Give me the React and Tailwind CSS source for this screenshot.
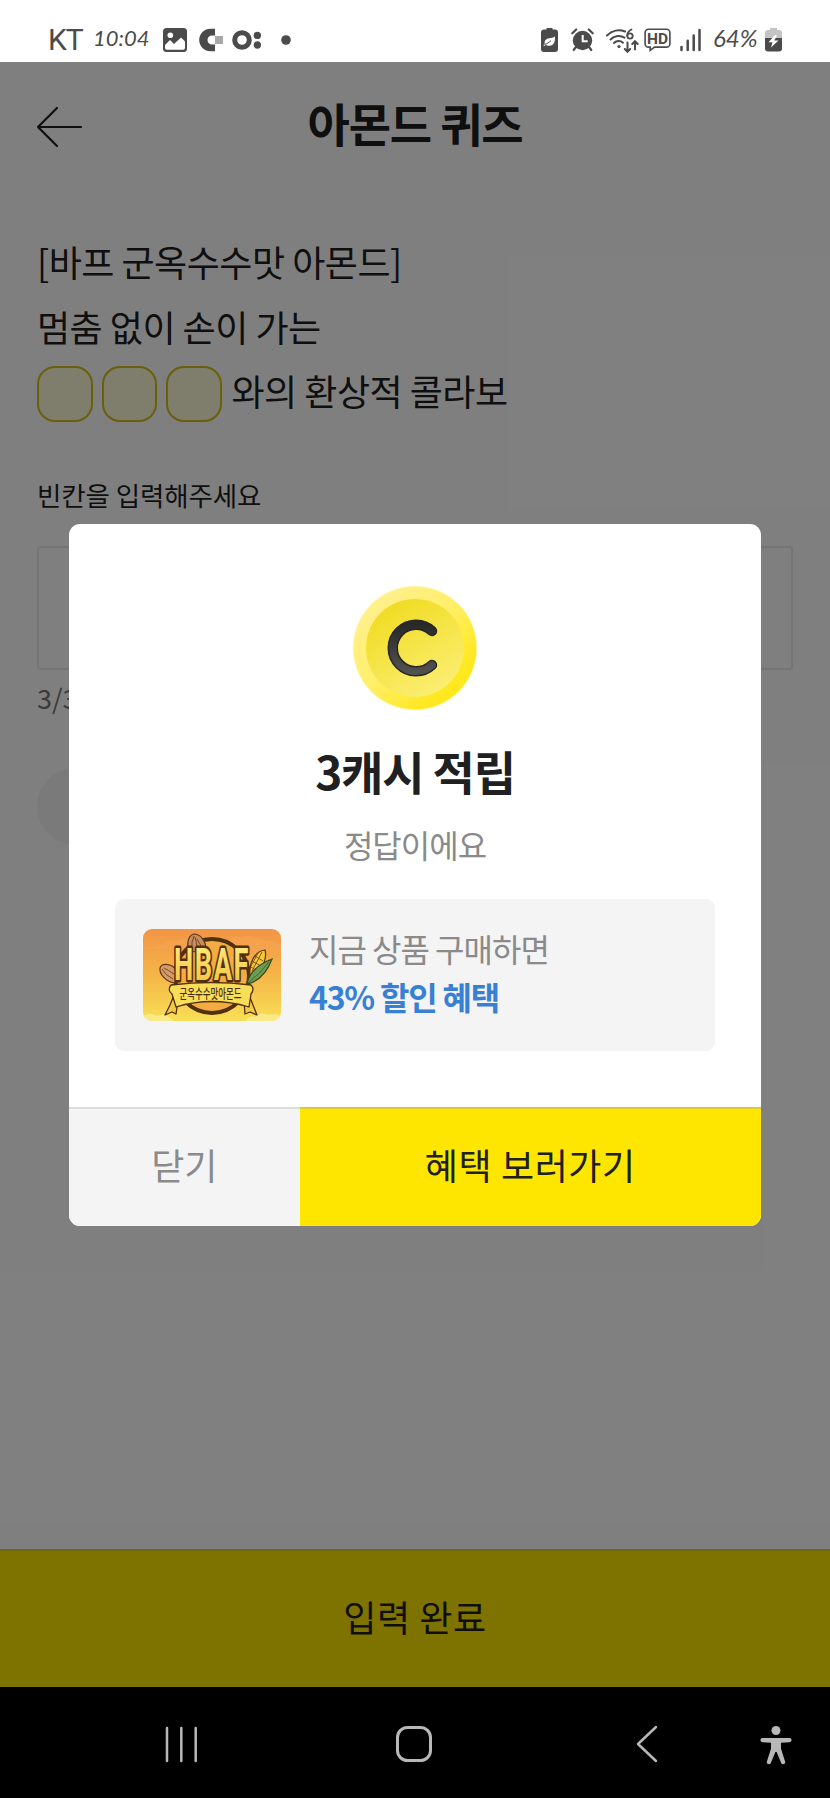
import React from "react";

const BLANKS = [0, 1, 2];

function PhotoIcon() {
    return (
        <svg width="24" height="24" viewBox="0 0 24 24" className="ml-3.5 shrink-0">
            <rect x="0" y="0" width="24" height="24" rx="3.5" fill="#4b4b4b" />
            <circle cx="7.3" cy="7.3" r="2.8" fill="#fff" />
            <path d="M2 17 7 12l4 4 7-6.5 4 4V20a1.7 1.7 0 0 1-1.7 1.7H3.7A1.7 1.7 0 0 1 2 20Z" fill="#fff" />
        </svg>
    );
}

function NotificationIcons() {
    return (
        <svg width="94" height="24" viewBox="0 0 94 24" className="ml-3 shrink-0">
            <path d="M16 0.7v6.8h-3a4.5 4.5 0 0 0 0 9h3v6.8h-4.5a11.3 11.3 0 0 1 0-22.6Z" fill="#4b4b4b" />
            <rect x="16" y="8" width="8" height="8" fill="#a9a9a9" />
            <circle cx="43" cy="12" r="7.3" fill="none" stroke="#4b4b4b" strokeWidth="5" />
            <circle cx="58.3" cy="7.4" r="3.7" fill="#4b4b4b" />
            <circle cx="58.3" cy="17" r="3.7" fill="#4b4b4b" />
            <circle cx="87" cy="12" r="4.8" fill="#4b4b4b" />
        </svg>
    );
}

function BatterySaverIcon() {
    return (
        <svg width="17" height="24" viewBox="0 0 17 24" className="shrink-0">
            <path d="M5.5 0h6v1.5H14A3 3 0 0 1 17 4.5V21a3 3 0 0 1-3 3H3a3 3 0 0 1-3-3V4.5A3 3 0 0 1 3 1.5h2.5Z" fill="#4b4b4b" />
            <path d="M14 8.5c.3 5-1 9-5.5 9.3-1.7.1-3-.5-3.6-1L3 18.3 2.5 17l1.3-1c-.8-3.5 1.5-5.3 4.2-5.7 2.5-.4 4.3-.7 6-1.8Z" fill="#fff" />
            <path d="M3.5 16.5c2.5-.7 4.5-2 6.5-3.8" stroke="#4b4b4b" strokeWidth="1" fill="none" />
        </svg>
    );
}

function AlarmIcon() {
    return (
        <svg width="23" height="24" viewBox="0 0 23 24" className="ml-[13px] shrink-0">
            <circle cx="11.5" cy="12.5" r="9.7" fill="#4b4b4b" />
            <path d="M1.3 5.3 5.2 1.5M21.7 5.3 17.8 1.5" stroke="#4b4b4b" strokeWidth="2.2" strokeLinecap="round" />
            <path d="m5 19-2.3 3M18 19l2.3 3" stroke="#4b4b4b" strokeWidth="2.2" strokeLinecap="round" />
            <path d="M11.7 7v6.2h5" stroke="#fff" strokeWidth="2" fill="none" />
        </svg>
    );
}

function WifiIcon() {
    return (
        <svg width="33" height="26" viewBox="0 0 33 26" className="mt-0.5 ml-3 shrink-0">
            <g fill="none" stroke="#4b4b4b" strokeWidth="2" strokeLinecap="round">
                <path d="M1 7.5C6 2.5 13 1 19 3.5" />
                <path d="M4.5 11.5C8.5 7.5 14.5 7 18.5 9.7" />
                <path d="M8 15c2.5-2.5 6.5-2.5 9-.3" />
                <path d="M25.5 1.5c-3 1.5-4.3 4-4.3 6" strokeWidth="1.8" />
                <circle cx="24" cy="8" r="2.7" strokeWidth="1.8" />
                <path d="M21.5 14.5v9M18.8 21l2.7 2.8 2.7-2.8" />
                <path d="M29 21.5v-8M26.300 16l2.700-2.800 2.700 2.800" />
            </g>
            <circle cx="13" cy="18.5" r="1.6" fill="#4b4b4b" />
        </svg>
    );
}

function HdIcon() {
    return (
        <svg width="27" height="24" viewBox="0 0 27 24" className="ml-[5px] shrink-0">
            <path
                d="M4.5 1.3h18a3.4 3.4 0 0 1 3.4 3.4v11a3.4 3.4 0 0 1-3.4 3.4H10.5l-4.3 3.3v-3.3H4.5a3.4 3.4 0 0 1-3.4-3.4v-11a3.4 3.4 0 0 1 3.4-3.4Z"
                fill="none"
                stroke="#4b4b4b"
                strokeWidth="1.6"
            />
            <text x="13.5" y="15.8" textAnchor="middle" fontFamily="Roboto, sans-serif" fontWeight="700" fontSize="15.5" fill="#4b4b4b">
                HD
            </text>
        </svg>
    );
}

function SignalIcon() {
    return (
        <svg width="21" height="24" viewBox="0 0 21 24" className="ml-[9px] shrink-0">
            <path d="M1.5 19v3M7.7 12.8V22M13.7 7.5V22M19.5 2v20" stroke="#4b4b4b" strokeWidth="2.5" strokeLinecap="round" />
        </svg>
    );
}

function ChargingIcon() {
    return (
        <svg width="17" height="24" viewBox="0 0 17 24" className="ml-1.5 shrink-0">
            <path d="M5 0h7v2h2a3 3 0 0 1 3 3v6H0V5a3 3 0 0 1 3-3h2Z" fill="#c4c4c4" />
            <path d="M0 10h17v10.5a3 3 0 0 1-3 3H3a3 3 0 0 1-3-3Z" fill="#4b4b4b" />
            <path d="m10 7-6.5 7.3h4L6 19.5l7.5-7H9.2L12 7.5Z" fill="#fff" />
        </svg>
    );
}

function StatusBar() {
    return (
        <div className="flex h-[62px] items-center justify-between bg-white pt-[18px] pr-12 pl-12 text-[#4b4b4b]">
            <div className="flex items-center">
                <span className="w-[37px] font-['Roboto',sans-serif] text-[30px] leading-6 tracking-[-1px]">KT</span>
                <span className="mb-1 ml-2 w-[56px] font-['Lato',sans-serif] text-[22px] leading-6 whitespace-nowrap italic">10:04</span>
                <PhotoIcon />
                <NotificationIcons />
            </div>
            <div className="flex items-center">
                <BatterySaverIcon />
                <AlarmIcon />
                <WifiIcon />
                <HdIcon />
                <SignalIcon />
                <span className="mb-1 ml-3 w-[46px] font-['Lato',sans-serif] text-[24px] leading-6 whitespace-nowrap italic">64%</span>
                <ChargingIcon />
            </div>
        </div>
    );
}

function CoinIcon() {
    return (
        <svg width="126" height="126" viewBox="0 0 126 126">
            <defs>
                <linearGradient id="rim" x1="0.15" y1="0.15" x2="0.85" y2="0.85">
                    <stop offset="0" stopColor="#fff08c" />
                    <stop offset="0.45" stopColor="#ffef6a" />
                    <stop offset="0.9" stopColor="#ffe81f" />
                </linearGradient>
                <linearGradient id="face" x1="0.25" y1="0.05" x2="0.75" y2="0.95">
                    <stop offset="0" stopColor="#f0dc22" />
                    <stop offset="1" stopColor="#fbee73" />
                </linearGradient>
                <linearGradient id="letter" x1="0" y1="0" x2="0" y2="1">
                    <stop offset="0" stopColor="#292929" />
                    <stop offset="1" stopColor="#505050" />
                </linearGradient>
            </defs>
            <circle cx="63" cy="63" r="62.5" fill="#fffbd0" />
            <circle cx="63" cy="63" r="61.5" fill="url(#rim)" />
            <circle cx="63" cy="63" r="49" fill="url(#face)" />
            <path d="M80 46a23.3 23.3 0 1 0 0 34" fill="none" stroke="#28261b" strokeWidth="10.5" strokeLinecap="round" />
            <path d="M80 46a23.3 23.3 0 1 0 0 34" fill="none" stroke="url(#letter)" strokeWidth="7.5" strokeLinecap="round" />
        </svg>
    );
}

function ProductImage() {
    return (
        <svg width="138" height="92" viewBox="0 0 138 92" className="shrink-0 rounded-[9px]">
            <defs>
                <linearGradient id="sky" x1="0" y1="0" x2="0" y2="1">
                    <stop offset="0" stopColor="#f29545" />
                    <stop offset="0.5" stopColor="#f5b548" />
                    <stop offset="1" stopColor="#f8df55" />
                </linearGradient>
                <linearGradient id="gold" x1="0" y1="0" x2="0" y2="1">
                    <stop offset="0" stopColor="#fff08a" />
                    <stop offset="1" stopColor="#f3bd36" />
                </linearGradient>
            </defs>
            <rect width="138" height="92" fill="url(#sky)" />
            <path d="M0 20q5-5 11-1 5-5 11-3 4-7 12-4 6-5 12 1l8 7H0ZM86 10q6-5 12-1 8-5 14 0 7-1 9 3 9-2 17 4v6H90Z" fill="#f6a653" opacity="0.5" />
            <path d="M0 87q8-4 14 0 8-3 13 2l4 3H0ZM103 92q3-6 10-4 5-6 12-2 7-2 13 1v5Z" fill="#faea87" />
            <circle cx="69" cy="47" r="37" fill="#f4ac40" stroke="#50300f" strokeWidth="4" />
            {/* almonds */}
            <g stroke="#5f3716" strokeWidth="1.2">
                <path d="M46 22c-3-9 0-17 6-17 7 1 12 9 11 19Z" fill="#c98c5c" />
                <path d="M32 54c-9-1-16-9-15-15 2-6 14-4 16 3Z" fill="#d49a68" />
                <path d="M49 21q-1-9 2-14M54 22q0-9-2-14M59 22q-1-7-5-12M30 50q-8-4-11-10M31 45q-6-4-10-6" fill="none" strokeWidth="0.8" />
            </g>
            {/* corn */}
            <path d="M107 47c-1-14 5-25 15-26 2 7-1 17-10 25Z" fill="#f5c73a" stroke="#5f3716" strokeWidth="1.2" />
            <path d="m109 32 9 5M112 27l8 5M108 38l6 4M119 23l-10 19M115 24l-7 13" stroke="#7b4a12" strokeWidth="0.9" />
            <path d="M104 54c3-12 12-19 25-24-4 11-11 20-21 24Z" fill="#6e9b51" stroke="#344a1f" strokeWidth="1.2" />
            <path d="M106 53q11-8 20-20" stroke="#3f6430" strokeWidth="0.9" fill="none" />
            <text
                x="69"
                y="50.5"
                textAnchor="middle"
                textLength="76"
                lengthAdjust="spacingAndGlyphs"
                fontFamily="Roboto, sans-serif"
                fontWeight="700"
                fontSize="44"
                letterSpacing="2.5"
                fill="url(#gold)"
                stroke="#50300f"
                strokeWidth="5"
                strokeLinejoin="round"
                paintOrder="stroke"
            >
                HBAF
            </text>
            {/* ribbon */}
            <g fill="#f3c94a" stroke="#50300f" strokeWidth="1.3" strokeLinejoin="round">
                <path d="m31 66-4 10-5 10 7-3 4 2 2-13ZM106 66l4 10 4 10-7-3-5 2-1-13Z" />
                <path d="M28 56q41-5 80 0 4 4 0 9l-2 13q-37-11-73 0l-4-13q-5-4-1-9Z" fill="#f8de58" />
            </g>
            <text
                x="67.5"
                y="68.5"
                textAnchor="middle"
                textLength="62"
                lengthAdjust="spacingAndGlyphs"
                fontFamily="'Noto Sans CJK KR', sans-serif"
                fontWeight="500"
                fontSize="13"
                fill="#4a2b0e"
            >
                군옥수수맛아몬드
            </text>
        </svg>
    );
}

function QuizPage() {
    return (
        <div className="flex h-[1625px] flex-col bg-white text-[#1e1e1e]">
            <header className="grid h-32 grid-cols-[130px_1fr_130px] items-center">
                <svg width="47" height="42" viewBox="0 0 47 42" className="mt-0.5 ml-9">
                    <path d="M21 2 2 21l19 19M2 21h43" fill="none" stroke="currentColor" strokeWidth="2.2" strokeLinecap="round" strokeLinejoin="round" />
                </svg>
                <h1 className="pb-2 text-center text-[46px] leading-none font-bold tracking-[-1.2px]">아몬드 퀴즈</h1>
            </header>

            <main className="flex flex-1 flex-col px-[37px] pt-[39px]">
                <div className="text-[36px] leading-[64.5px] tracking-[-0.5px]">
                    <p>[바프 군옥수수맛 아몬드]</p>
                    <p>멈춤 없이 손이 가는</p>
                    <div className="flex items-center">
                        <div className="mt-[7px] mr-2.5 flex gap-[9px]">
                            {BLANKS.map((blank) => (
                                <span key={blank} className="h-14 w-[55.5px] rounded-[18px] border-2 border-[#d4c016] bg-[#fffcdb]" />
                            ))}
                        </div>
                        <span>와의 환상적 콜라보</span>
                    </div>
                </div>
                <p className="mt-[52px] text-[26.5px] leading-10 tracking-[-0.1px]">빈칸을 입력해주세요</p>
                <div className="mt-[31px] h-[124px] shrink-0 rounded-sm border-2 border-[#ebebeb]" />
                <p className="mt-2 text-[27px] leading-10 text-[#777777]">3/3</p>
                <div className="mt-[50px] h-[77px] w-60 rounded-full bg-[#f4f4f4]" />
            </main>

            <button className="h-[138px] w-full shrink-0 border-t-2 border-[#e0cd20] bg-[#ffe600] pb-1.5 text-[36px] tracking-[0.6px]">
                입력 완료
            </button>
        </div>
    );
}

function RewardModal() {
    return (
        <div className="flex h-[702.5px] w-[692px] flex-col overflow-hidden rounded-[11px] bg-white">
            <div className="flex flex-1 flex-col items-center pt-[61px]">
                <CoinIcon />
                <h2 className="mt-[31px] text-[46px] leading-[56px] font-bold tracking-[-1.2px] text-[#202020]">3캐시 적립</h2>
                <p className="mt-[26px] text-[32px] leading-10 tracking-[-1px] text-[#8a8a8a]">정답이에요</p>
                <div className="mt-[35px] flex h-[152px] w-[600px] items-center gap-7 rounded-[9px] bg-[#f4f4f4] px-7">
                    <ProductImage />
                    <div className="pb-[5px] text-[32px] leading-[48px] tracking-[-1px]">
                        <p className="text-[#8a8a8a]">지금 상품 구매하면</p>
                        <p className="font-bold tracking-[-1.2px] text-[#3880d4]">43% 할인 혜택</p>
                    </div>
                </div>
            </div>
            <div className="grid h-[119.5px] grid-cols-3 text-[36px]">
                <button className="border-t-2 border-[#dddddd] bg-[#f4f4f4] pb-1.5 text-[#8a8a8a]">닫기</button>
                <button className="col-span-2 border-t-2 border-[#dccb28] bg-[#ffe600] pb-1.5 tracking-[0.6px] text-[#202020]">
                    혜택 보러가기
                </button>
            </div>
        </div>
    );
}

function NavigationBar() {
    return (
        <div className="flex h-[111px] items-center bg-black pt-0.5 pl-[164px] text-[#b8b8b8]">
            <svg width="36" height="38" viewBox="0 0 36 38" fill="none" stroke="currentColor" strokeWidth="2.5" strokeLinecap="round">
                <path d="M3 3v33M17.3 3v33M31.7 3v33" />
            </svg>
            <svg width="38" height="38" viewBox="0 0 38 38" fill="none" stroke="currentColor" strokeWidth="3" className="ml-[195px]">
                <rect x="2.5" y="2.5" width="33" height="33" rx="10" />
            </svg>
            <svg width="24" height="38" viewBox="0 0 24 38" fill="none" stroke="currentColor" strokeWidth="2.5" strokeLinecap="round" strokeLinejoin="round" className="ml-[202px]">
                <path d="M21 2 3 19l18 17" />
            </svg>
            <svg width="32" height="40" viewBox="0 0 32 40" fill="currentColor" className="mt-0.5 ml-[101px]">
                <circle cx="16" cy="5.5" r="4.5" />
                <path d="M2.5 13h27a2 2 0 0 1 0 4.2L21 17.700v6l4.200 13a2.100 2.100 0 0 1-4 1.200L16.600 27h-1.200l-4.600 10.900a2.100 2.100 0 0 1-4-1.200l4.200-13v-6l-8.500-.5a2 2 0 0 1 0-4.200Z" />
            </svg>
        </div>
    );
}

function App() {
    return (
        <div className="flex h-[1798px] w-[830px] flex-col overflow-hidden font-['Noto_Sans_CJK_KR','Noto_Sans',sans-serif]">
            <StatusBar />
            <div className="relative">
                <QuizPage />
                <div className="absolute inset-0 flex justify-center bg-black/50 pt-[461.5px]">
                    <RewardModal />
                </div>
            </div>
            <NavigationBar />
        </div>
    );
}

export default App;
